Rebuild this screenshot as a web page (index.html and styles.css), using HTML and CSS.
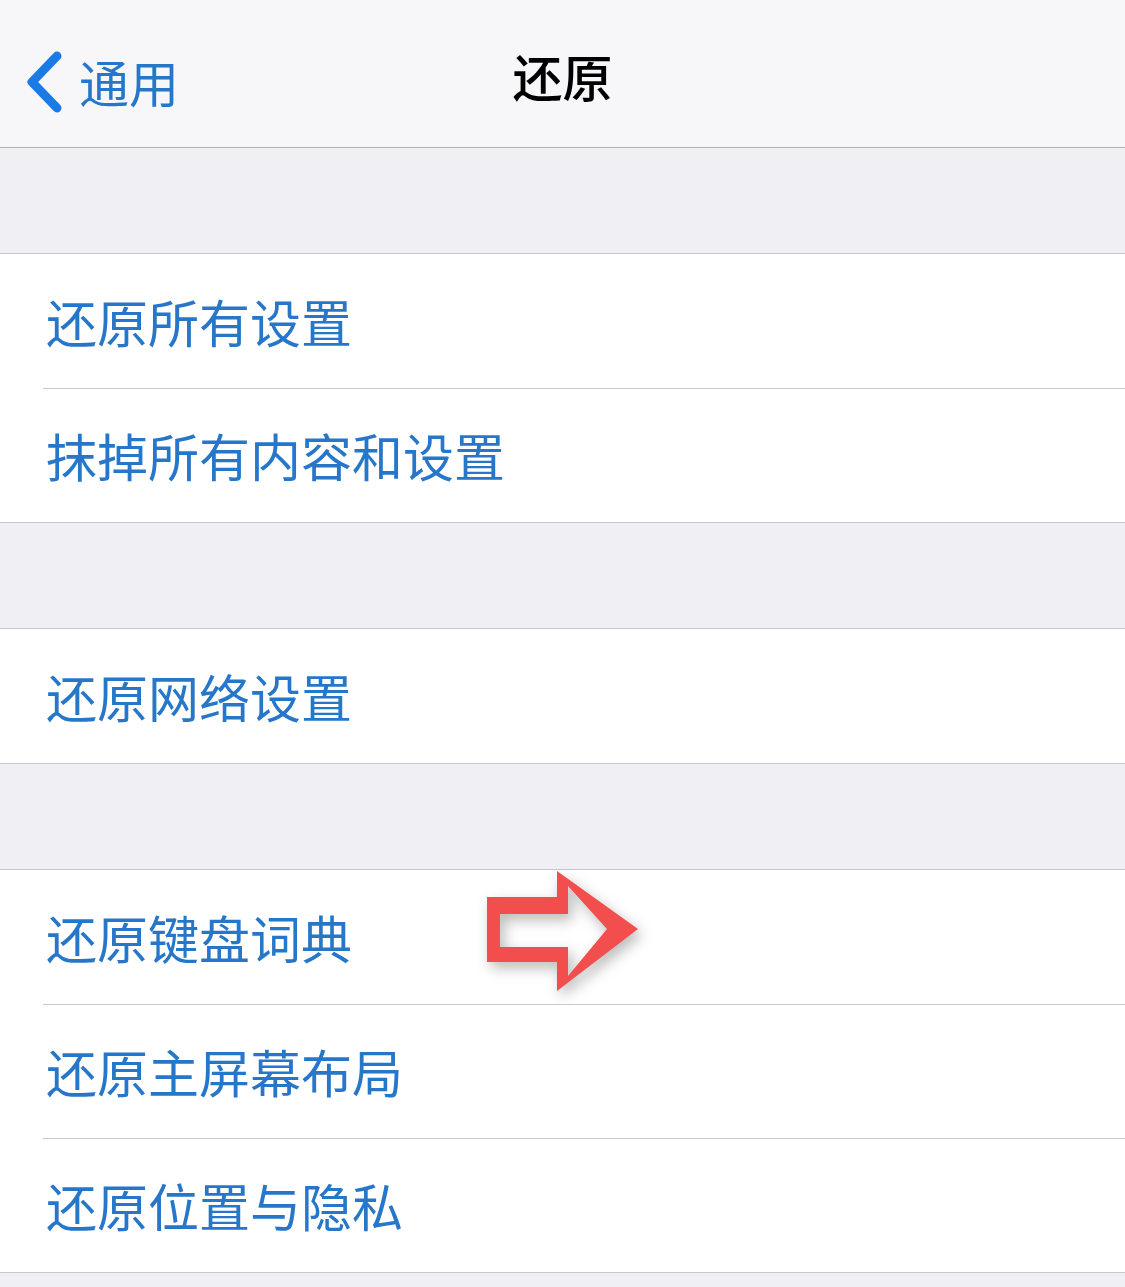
FILE: index.html
```
<!DOCTYPE html>
<html lang="zh-CN">
<head>
    <meta charset="UTF-8">
    <meta name="viewport" content="width=device-width, initial-scale=1.0">
    <title>还原</title>
    <link rel="stylesheet" href="styles.css">
</head>
<body>
    <div class="screen">
        <header class="nav-bar">
            <a class="nav-back" href="#">
                <svg class="chevron" width="40" height="64" viewBox="0 0 40 64">
                    <polyline points="33,6 8,32 33,58" fill="none" stroke="#1a7ae6" stroke-width="9" stroke-linecap="round" stroke-linejoin="round"/>
                </svg>
                <span>通用</span>
            </a>
            <h1 class="nav-title">还原</h1>
        </header>

        <div class="group-gap"></div>
        <ul class="group">
            <li class="row">还原所有设置</li>
            <li class="row">抹掉所有内容和设置</li>
        </ul>

        <div class="group-gap"></div>
        <ul class="group">
            <li class="row">还原网络设置</li>
        </ul>

        <div class="group-gap"></div>
        <ul class="group">
            <li class="row">
                还原键盘词典
                <!-- annotation arrow drawn over the row -->
                <svg class="marker" width="170" height="140" viewBox="0 0 170 140">
                    <path fill="#f34e4e" fill-rule="evenodd"
                        d="M7 33 L77 33 L77 7 L158 65 L77 127 L77 98 L7 98 Z
                           M20 50 L20 83 L88 83 L88 112 L127 65 L88 22 L88 50 Z"/>
                </svg>
            </li>
            <li class="row">还原主屏幕布局</li>
            <li class="row">还原位置与隐私</li>
        </ul>
        <div class="group-gap"></div>
    </div>
</body>
</html>
```

FILE: styles.css
```
:root {
    --bg-gray: #efeff4;
    --nav-bg: #f7f7f9;
    --line: #c8c7cc;
    --blue: #2677ca;
}
html, body {
    margin: 0;
    padding: 0;
}
body {
    font-family: "Noto Sans CJK SC", "Noto Sans", sans-serif;
    background: var(--bg-gray);
    width: 1125px;
    height: 1287px;
    overflow: hidden;
}
.screen {
    display: flex;
    flex-direction: column;
}
.nav-bar {
    height: 147px;
    background: var(--nav-bg);
    border-bottom: 1px solid #b4b4b8;
    display: flex;
    align-items: center;
    justify-content: center;
    position: relative;
}
.nav-back {
    position: absolute;
    left: 24px;
    top: 50px;
    display: flex;
    align-items: center;
    gap: 15px;
    color: var(--blue);
    text-decoration: none;
    font-size: 50px;
    line-height: 64px;
}
.nav-back span {
    margin-top: -3px;
}
.chevron {
    display: block;
}
.nav-title {
    margin: 0;
    font-size: 50px;
    font-weight: 500;
    color: #000;
    line-height: 64px;
    margin-top: 2px;
}
.group-gap {
    height: 105px;
    flex-shrink: 0;
    background: var(--bg-gray);
}
.group {
    list-style: none;
    margin: 0;
    padding: 0;
    background: #fff;
    border-top: 1px solid var(--line);
    border-bottom: 1px solid var(--line);
}
.row {
    height: 134px;
    display: flex;
    align-items: center;
    padding-left: 46px;
    font-size: 51px;
    color: var(--blue);
    position: relative;
}
.row + .row::before {
    content: "";
    position: absolute;
    left: 43px;
    right: 0;
    top: 0;
    border-top: 1px solid var(--line);
}
.marker {
    position: absolute;
    left: 480px;
    top: -6px;
    filter: drop-shadow(4px 6px 7px rgba(0, 0, 0, 0.28));
}
```
